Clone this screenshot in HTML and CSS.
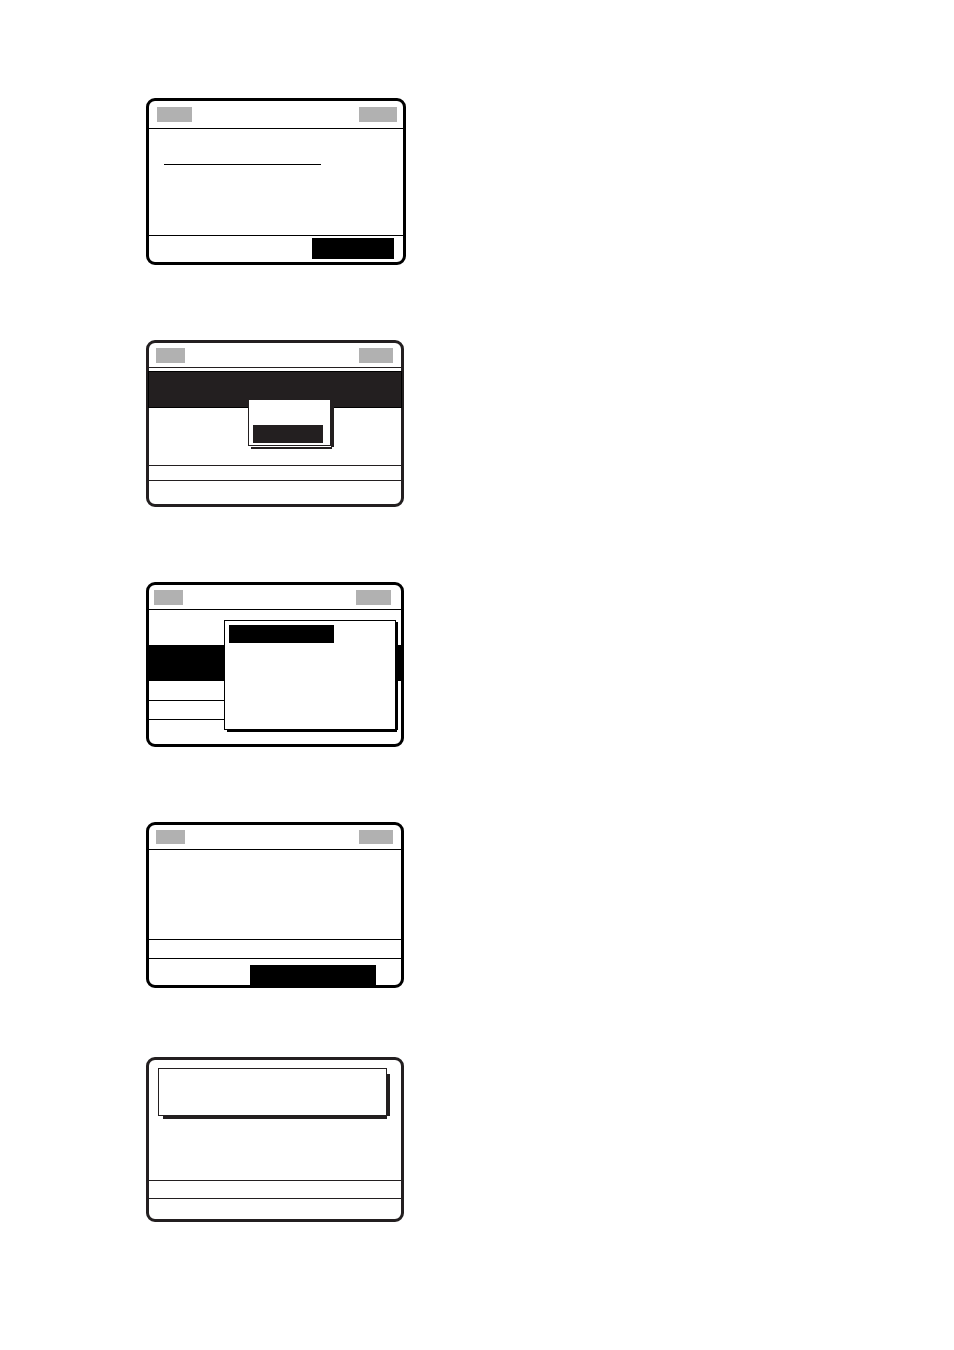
FILE: index.html
```html
<!DOCTYPE html>
<html lang="en">
<head>
<meta charset="utf-8">
<link rel="stylesheet" href="styles.css">
</head>
<body>
<main class="page">
  <section class="screen screen--wide">
    <div class="header header--tall"><span class="badge badge--left"></span><span class="badge badge--right"></span></div>
    <div class="body body--entry"><div class="underline"></div></div>
    <div class="footer"><div class="softkey"></div></div>
  </section>

  <section class="screen screen--soft screen--menu">
    <div class="header"><span class="badge"></span><span class="badge"></span></div>
    <div class="band"></div>
    <div class="body body--short"></div>
    <div class="strip"></div>
    <div class="footer"></div>
    <div class="popup popup--confirm"><div class="choice"></div></div>
  </section>

  <section class="screen screen--list">
    <div class="header"><span class="badge"></span><span class="badge"></span></div>
    <div class="body body--row"></div>
    <div class="band"></div>
    <div class="body body--gap"></div>
    <div class="strip"></div>
    <div class="footer"></div>
    <div class="popup popup--menu"><div class="choice"></div></div>
  </section>

  <section class="screen screen--status">
    <div class="header"><span class="badge"></span><span class="badge"></span></div>
    <div class="body body--tall"></div>
    <div class="strip"></div>
    <div class="footer"><div class="softkey"></div></div>
  </section>

  <section class="screen screen--soft screen--message">
    <div class="body body--message"><div class="panel"></div></div>
    <div class="strip"></div>
    <div class="footer"></div>
  </section>
</main>
</body>
</html>
```
FILE: styles.css
```css
* { box-sizing: border-box; }

body {
  margin: 0;
  background: #fff;
}

.page {
  display: flex;
  flex-direction: column;
  align-items: flex-start;
  gap: 75px;
  padding: 98px 24px 128px 146px;
}

.screen {
  --ink: #000;
  position: relative;
  width: 258px;
  max-width: 100%;
  border: 3px solid var(--ink);
  border-radius: 9px;
  background: #fff;
}

.screen--wide { width: 260px; }
.screen--soft { --ink: #231f20; }
.screen--message { margin-top: -6px; }

/* Status bar with its two indicators */
.header {
  display: flex;
  justify-content: space-between;
  height: 25px;
  padding: 5px 8px 0 7px;
  border-bottom: 1px solid var(--ink);
}

.header--tall {
  height: 28px;
  padding: 6px 6px 0 8px;
}

.screen--list .header { padding: 5px 10px 0 5px; }

.badge {
  width: 29px;
  height: 15px;
  background: #b1b1b1;
}

.badge:last-child { width: 34px; }
.screen--list .badge:last-child { width: 35px; }
.badge--left { width: 35px; }
.badge.badge--right { width: 38px; }
.screen--status .badge { height: 14px; }

/* Content area */
.body--entry {
  height: 106px;
  padding: 35px 15px 0;
}

.underline {
  width: 157px;
  height: 1px;
  background: var(--ink);
}

.body--short { height: 57px; }
.body--row { height: 35px; }
.body--gap { height: 19px; }
.body--tall { height: 89px; }

.body--message {
  height: 120px;
  padding: 8px 14px 0 9px;
}

/* Highlighted row */
.band {
  height: 36px;
  background: var(--ink);
}

.screen--menu .band {
  height: 37px;
  margin: 3px -1px 0;
  border: 1px solid #000;
}

/* Lower rows */
.strip {
  height: 19px;
  border-top: 1px solid var(--ink);
}

.screen--menu .strip { height: 15px; }
.screen--message .strip { height: 18px; }

.footer {
  display: flex;
  justify-content: flex-end;
  height: 27px;
  padding: 2px 9px 0;
  border-top: 1px solid var(--ink);
}

.screen--menu .footer { height: 24px; }
.screen--list .footer { height: 25px; }
.screen--list .strip,
.screen--list .footer { width: 30%; }
.screen--status .footer { padding: 6px 25px 0; }
.screen--message .footer { height: 21px; }

.softkey {
  width: 82px;
  height: 21px;
  background: var(--ink);
}

.screen--status .softkey {
  width: 126px;
  height: 20px;
}

/* Raised boxes with a hard shadow */
.popup,
.panel {
  border: 1px solid var(--ink);
  background: #fff;
}

.popup { position: absolute; }
.panel {
  position: relative;
  height: 48px;
}

.popup::before,
.popup::after,
.panel::before,
.panel::after {
  content: "";
  position: absolute;
  background: var(--ink);
}

.popup--confirm {
  top: 56px;
  left: 99px;
  width: 83px;
  height: 47px;
  padding: 25px 7px 0 4px;
}

.popup--confirm::before { top: 0; right: -4px; bottom: -2px; width: 3px; }
.popup--confirm::after { right: -2px; bottom: -4px; left: 2px; height: 2px; }

.popup--menu {
  top: 35px;
  left: 75px;
  width: 172px;
  height: 110px;
  padding: 4px;
}

.popup--menu::before { top: 1px; right: -3px; bottom: -1px; width: 3px; }
.popup--menu::after { right: -2px; bottom: -3px; left: 2px; height: 3px; }

.panel::before { top: 5px; right: -4px; bottom: -1px; width: 3px; }
.panel::after { right: -1px; bottom: -4px; left: 4px; height: 3px; }

.choice {
  height: 18px;
  background: var(--ink);
}

.popup--menu .choice { width: 105px; }
```
